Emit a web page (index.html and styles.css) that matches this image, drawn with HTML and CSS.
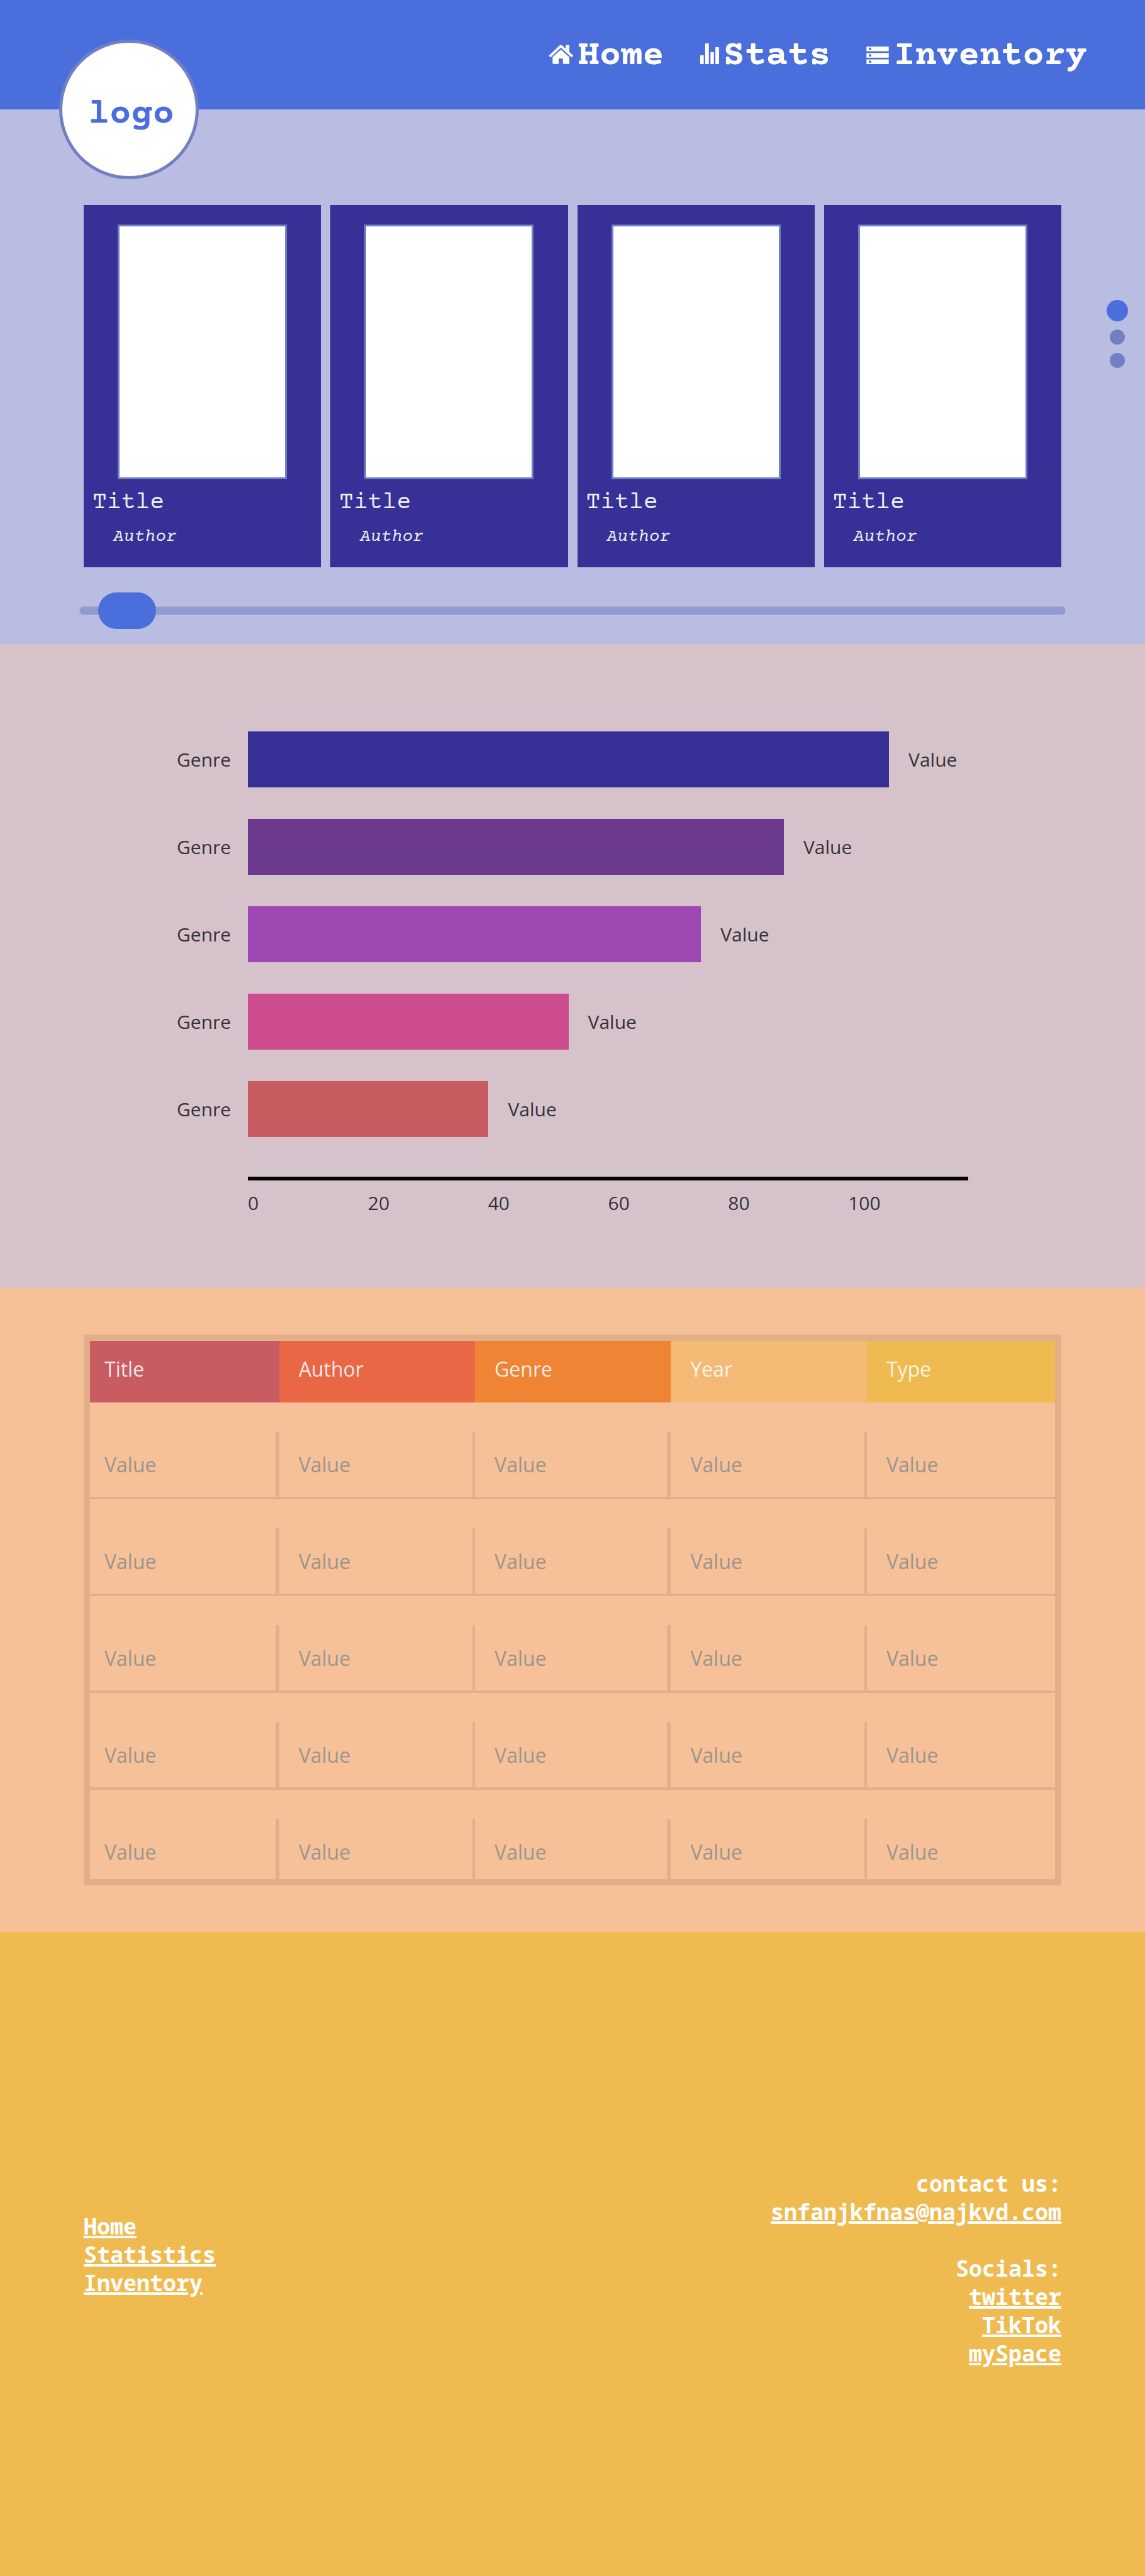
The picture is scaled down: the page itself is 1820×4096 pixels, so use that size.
FILE: index.html
```html
<!DOCTYPE html>
<html lang="en">
<head>
  <meta charset="utf-8">
  <meta name="viewport" content="width=device-width, initial-scale=1">
  <title>Library</title>
  <link rel="stylesheet" href="styles.css">
</head>
<body>
  <div class="hero">
    <header class="topbar">
      <a class="logo" href="#home">logo</a>
      <nav class="nav" aria-label="Main">
        <a class="nav-link" href="#home">
          <svg width="40" height="31" viewBox="0 0 42 33" fill="currentColor" aria-hidden="true"><path d="M0 18.5 19 .8Q20.5-.4 22 .8L28.7 7V.6h6.1v12l6.8 6L38.6 21.500 20.500 5 3 21.500Z"/><path d="M20.500 8.300 34.800 21v10.500q0 1.300-1.300 1.300H24v-8.500q0-1-1-1h-5.200q-1 0-1 1v8.500H7.800q-1.300 0-1.300-1.300V21Z"/></svg>
          <span>Home</span>
        </a>
        <a class="nav-link" href="#stats">
          <svg width="30" height="33" viewBox="0 0 32 35" fill="currentColor" aria-hidden="true"><rect x="0" y="20" width="6" height="15" rx=".8"/><rect x="8.400" y="0" width="6.200" height="35" rx=".8"/><rect x="17.400" y="14.500" width="5.800" height="20.500" rx=".8"/><rect x="25.700" y="6.200" width="6.200" height="28.800" rx=".8"/></svg>
          <span>Stats</span>
        </a>
        <a class="nav-link" href="#inventory">
          <svg width="36" height="28" viewBox="0 0 38 30" fill="currentColor" fill-rule="evenodd" aria-hidden="true"><path d="M0 0h38v8H0ZM4.200 2v3.800h3.800V2ZM0 11h38v8H0ZM4.200 13v3.800h3.800V13ZM0 22h38v8H0ZM4.200 24v3.800h3.800V24Z"/></svg>
          <span>Inventory</span>
        </a>
      </nav>
    </header>

    <main class="shelf" id="home">
      <div class="books">
        <article class="book">
          <div class="cover"></div>
          <h2 class="book-title">Title</h2>
          <p class="book-author">Author</p>
        </article>
        <article class="book">
          <div class="cover"></div>
          <h2 class="book-title">Title</h2>
          <p class="book-author">Author</p>
        </article>
        <article class="book">
          <div class="cover"></div>
          <h2 class="book-title">Title</h2>
          <p class="book-author">Author</p>
        </article>
        <article class="book">
          <div class="cover"></div>
          <h2 class="book-title">Title</h2>
          <p class="book-author">Author</p>
        </article>
      </div>
      <nav class="dots" aria-label="Sections">
        <a class="dot dot-current" href="#home" aria-label="Home"></a>
        <a class="dot" href="#stats" aria-label="Stats"></a>
        <a class="dot" href="#inventory" aria-label="Inventory"></a>
      </nav>
      <input class="slider" type="range" min="0" max="100" value="2" aria-label="Scroll books">
    </main>
  </div>

  <section class="stats" id="stats">
    <div class="chart">
      <div class="chart-row">
        <span>Genre</span>
        <div class="track"><div class="bar bar-indigo" style="width: 89%"></div><span>Value</span></div>
      </div>
      <div class="chart-row">
        <span>Genre</span>
        <div class="track"><div class="bar bar-purple" style="width: 74.4%"></div><span>Value</span></div>
      </div>
      <div class="chart-row">
        <span>Genre</span>
        <div class="track"><div class="bar bar-violet" style="width: 62.9%"></div><span>Value</span></div>
      </div>
      <div class="chart-row">
        <span>Genre</span>
        <div class="track"><div class="bar bar-pink" style="width: 44.5%"></div><span>Value</span></div>
      </div>
      <div class="chart-row">
        <span>Genre</span>
        <div class="track"><div class="bar bar-red" style="width: 33.4%"></div><span>Value</span></div>
      </div>
    </div>
    <div class="axis">
      <span>0</span><span>20</span><span>40</span><span>60</span><span>80</span><span>100</span>
    </div>
  </section>

  <section class="inventory" id="inventory">
    <table class="table">
      <colgroup>
        <col class="col-first"><col><col><col><col class="col-last">
      </colgroup>
      <thead>
        <tr>
          <th class="head-red" scope="col">Title</th>
          <th class="head-coral" scope="col">Author</th>
          <th class="head-orange" scope="col">Genre</th>
          <th class="head-peach" scope="col">Year</th>
          <th class="head-yellow" scope="col">Type</th>
        </tr>
      </thead>
      <tbody>
        <tr><td><div class="cell">Value</div></td><td><div class="cell">Value</div></td><td><div class="cell">Value</div></td><td><div class="cell">Value</div></td><td><div class="cell">Value</div></td></tr>
        <tr><td><div class="cell">Value</div></td><td><div class="cell">Value</div></td><td><div class="cell">Value</div></td><td><div class="cell">Value</div></td><td><div class="cell">Value</div></td></tr>
        <tr><td><div class="cell">Value</div></td><td><div class="cell">Value</div></td><td><div class="cell">Value</div></td><td><div class="cell">Value</div></td><td><div class="cell">Value</div></td></tr>
        <tr><td><div class="cell">Value</div></td><td><div class="cell">Value</div></td><td><div class="cell">Value</div></td><td><div class="cell">Value</div></td><td><div class="cell">Value</div></td></tr>
        <tr><td><div class="cell">Value</div></td><td><div class="cell">Value</div></td><td><div class="cell">Value</div></td><td><div class="cell">Value</div></td><td><div class="cell">Value</div></td></tr>
      </tbody>
    </table>
  </section>

  <footer class="footer">
    <ul class="links">
      <li><a href="#home">Home</a></li>
      <li><a href="#stats">Statistics</a></li>
      <li><a href="#inventory">Inventory</a></li>
    </ul>
    <div class="contact">
      <p>contact us:<br><a href="mailto:snfanjkfnas@najkvd.com">snfanjkfnas@najkvd.com</a></p>
      <p>Socials:<br><a href="#twitter">twitter</a><br><a href="#tiktok">TikTok</a><br><a href="#myspace">mySpace</a></p>
    </div>
  </footer>
</body>
</html>
```
FILE: styles.css
```css
:root {
  --blue: #4a6edb;
  --lavender: #b8bde1;
  --slate: #727fc2;
  --indigo: #373197;
  --rule: #e1b08b;
  --gutter: 133px;
  --typewriter: "Courier Prime", "Nimbus Mono PS", "Courier New", "Liberation Mono", monospace;
  --mono: Consolas, "Noto Sans Mono", "DejaVu Sans Mono", monospace;
  --sans: "Open Sans", "Noto Sans", sans-serif;
}

* {
  box-sizing: border-box;
}

body {
  display: grid;
  grid-template-rows: repeat(4, minmax(max-content, 1fr));
  min-height: 100vh;
  margin: 0;
  font-family: var(--sans);
}

/* Header */
.hero {
  background: var(--lavender);
}

.topbar {
  position: relative;
  display: flex;
  justify-content: flex-end;
  height: 174px;
  padding: 59px 92px 0 0;
  background: var(--blue);
  font: bold 57px/60px var(--typewriter);
}

.logo {
  position: absolute;
  top: 63px;
  left: 94px;
  display: flex;
  align-items: center;
  justify-content: center;
  width: 222px;
  height: 222px;
  padding: 15px 0 0 7px;
  border: 5px solid var(--slate);
  border-radius: 50%;
  background: #fff;
  color: var(--blue);
  text-decoration: none;
}

.nav {
  display: flex;
  gap: 57px;
}

.nav-link {
  display: flex;
  align-items: baseline;
  gap: 7px;
  height: 60px;
  color: #fff;
  text-decoration: none;
}

/* Book shelf */
.shelf {
  display: grid;
  grid-template-columns: var(--gutter) 1fr var(--gutter);
  row-gap: 40px;
  padding-top: 152px;
}

.books {
  grid-column: 2;
  display: grid;
  grid-template-columns: repeat(4, 1fr);
  gap: 15px;
}

.book {
  height: 576px;
  padding: 31px 14px 0;
  background: var(--indigo);
  color: #f0eff8;
  font-family: var(--typewriter);
}

.cover {
  width: 269px;
  max-width: 100%;
  height: 405px;
  margin: 0 auto;
  border: 3px solid var(--slate);
  background: #fff;
}

.book-title {
  margin: 16px 0 0;
  font-size: 38px;
  font-weight: normal;
  line-height: 44px;
}

.book-author {
  margin: 16px 0 0;
  padding-left: 33px;
  font-size: 28px;
  font-style: italic;
  line-height: 32px;
}

.dots {
  display: flex;
  flex-direction: column;
  align-items: center;
  justify-self: end;
  gap: 13px;
  padding: 151px 27px 0 0;
}

.dot {
  width: 24px;
  height: 24px;
  border-radius: 50%;
  background: var(--slate);
}

.dot-current {
  width: 34px;
  height: 34px;
  background: var(--blue);
}

.slider {
  grid-column: 2;
  height: 58px;
  margin: 0 -7px;
  background: none;
  appearance: none;
}

.slider::-webkit-slider-runnable-track {
  height: 14px;
  border: 1px solid #a3abd8;
  border-radius: 7px;
  background: #919bd0;
}

.slider::-webkit-slider-thumb {
  width: 92px;
  height: 58px;
  margin-top: -23px;
  border: 0;
  border-radius: 29px;
  background: var(--blue);
  appearance: none;
}

/* Chart */
.stats {
  padding: 139px 281px 0;
  background: #d6c2cb;
  color: #343338;
  font-size: 30px;
  line-height: 40px;
}

.chart {
  display: grid;
  gap: 50px;
}

.chart-row {
  display: grid;
  grid-template-columns: 113px 1fr;
  align-items: center;
}

.track {
  display: flex;
  align-items: center;
  gap: 31px;
}

.bar {
  flex: none;
  height: 89px;
}

.bar-indigo { background: var(--indigo); }
.bar-purple { background: #6b398e; }
.bar-violet { background: #9d48b3; }
.bar-pink { background: #cd4c8e; }
.bar-red { background: #c85c61; }

.axis {
  display: grid;
  grid-template-columns: repeat(6, 1fr);
  margin: 63px 0 0 113px;
  padding-top: 16px;
  border-top: 6px solid #000;
}

/* Inventory table */
.inventory {
  display: flex;
  align-items: center;
  padding: 0 var(--gutter);
  background: #f6c199;
}

.table {
  width: 100%;
  table-layout: fixed;
  border: 10px solid var(--rule);
  border-spacing: 0;
  font-size: 32px;
  line-height: 44px;
}

.col-first {
  width: 19.6%;
}

.col-last {
  width: 19.5%;
}

th {
  padding: 23px 31px 31px;
  color: rgba(255, 255, 255, 0.87);
  font-weight: normal;
  text-align: left;
}

.head-red { background: #c85c62; }
.head-coral { background: #e96745; }
.head-orange { background: #ee8434; }
.head-peach { background: #f4b974; }
.head-yellow { background: #efbb51; }

td {
  padding: 46px 0 0;
  border-bottom: 4px solid var(--rule);
  color: #9c958d;
}

.cell {
  padding: 31px 31px 29px;
  border-right: 6px solid var(--rule);
}

td:nth-child(even) .cell {
  border-right-width: 4px;
}

td:last-child .cell {
  border-right: 0;
}

th:first-child,
td:first-child .cell {
  padding-left: 23px;
}

tr:last-child td {
  border-bottom: 0;
}

tr:last-child .cell {
  padding-bottom: 21px;
}

/* Footer */
.footer {
  display: flex;
  align-items: center;
  justify-content: space-between;
  padding: 0 var(--gutter);
  background: #efbb51;
  color: #fff;
  font: bold 35px/45px var(--mono);
}

.footer a {
  color: inherit;
  text-decoration-thickness: 4px;
}

.links {
  margin: 0;
  padding: 0;
  list-style: none;
}

.contact {
  padding-top: 45px;
  text-align: right;
}

.contact p {
  margin: 0;
}

.contact p + p {
  margin-top: 45px;
}
```
